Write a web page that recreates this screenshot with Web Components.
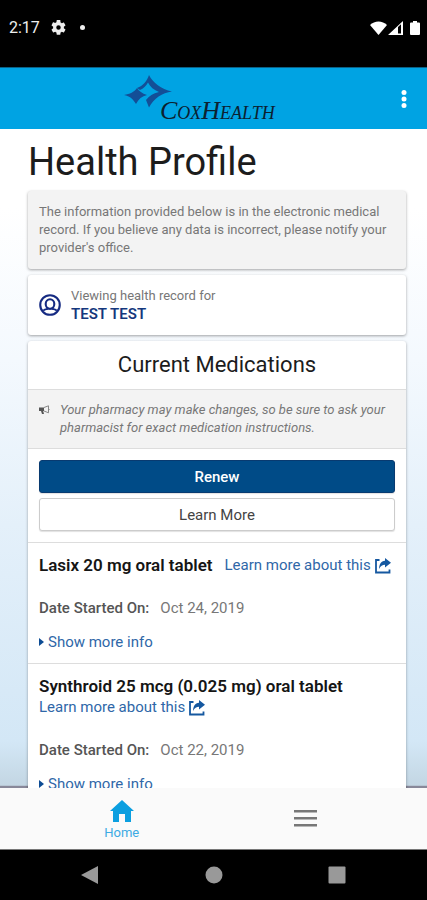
<!DOCTYPE html>
<html lang="en">
<head>
<meta charset="utf-8">
<meta name="viewport" content="width=device-width, initial-scale=1">
<title>Health Profile</title>
<style>
  body { margin: 0; font-family: Roboto, "Liberation Sans", sans-serif; color: #1c1c1c; background: #000; }
</style>
</head>
<body>
<health-app></health-app>
<script>
const define = (name, html, setup) => {
  const template = document.createElement('template');
  template.innerHTML = html;
  customElements.define(name, class extends HTMLElement {
    constructor() {
      super();
      this.attachShadow({ mode: 'open' }).append(template.content.cloneNode(true));
    }
    connectedCallback() { if (setup) setup(this, this.shadowRoot); }
  });
};

define('status-bar', `
<style>
  :host { display: flex; align-items: center; gap: 12px; height: 67px; padding: 0 7px 0 9px; box-sizing: border-box; background: #000; color: #eee; font-size: 16px; flex: none; }
  .row { display: flex; align-items: center; gap: 11px; flex: 1; padding-bottom: 12px; }
  .signals { display: flex; align-items: center; gap: 1px; padding-bottom: 12px; }
  .battery { margin-left: 6px; }
  .dot { width: 5px; height: 5px; border-radius: 50%; background: #eee; margin-left: 3px; }
</style>
<div class="row"><span>2:17</span>
<svg width="15" height="15" viewBox="2 2 20 20" fill="#eee"><path d="M19.14 12.94c.04-.3.06-.61.06-.94s-.02-.64-.07-.94l2.03-1.58c.18-.14.23-.41.12-.61l-1.92-3.32c-.12-.22-.37-.29-.59-.22l-2.39.96c-.5-.38-1.03-.7-1.62-.94l-.36-2.54A.48.48 0 0 0 13.92 2h-3.84c-.24 0-.43.17-.47.41l-.36 2.54c-.59.24-1.13.57-1.62.94l-2.39-.96c-.22-.08-.47 0-.59.22L2.74 8.87c-.12.21-.08.47.12.61l2.03 1.58c-.05.3-.09.63-.09.94s.02.64.07.94l-2.03 1.58a.49.49 0 0 0-.12.61l1.92 3.32c.12.22.37.29.59.22l2.39-.96c.5.38 1.03.7 1.62.94l.36 2.54c.05.24.24.41.48.41h3.84c.24 0 .44-.17.47-.41l.36-2.54c.59-.24 1.13-.56 1.62-.94l2.39.96c.22.08.47 0 .59-.22l1.92-3.32c.12-.22.07-.47-.12-.61l-2.01-1.58zM12 15a3 3 0 1 1 0-6 3 3 0 0 1 0 6z"/></svg>
<span class="dot"></span></div>
<div class="signals">
<svg width="17" height="14" viewBox="0 0 17 14" fill="#fff"><path d="M0 4C4.500-.7 12.500-.7 17 4L8.500 14z"/></svg>
<svg width="15" height="14" viewBox="0 0 15 14" fill="#fff"><path fill-rule="evenodd" d="M0 14L15 0v14zM10 6v6.500h3V3.200z"/></svg>
<svg class="battery" width="10" height="14" viewBox="0 0 10 14" fill="#fff"><path d="M3 0h4v1.500h2q1 0 1 1V13q0 1-1 1H1q-1 0-1-1V2.500q0-1 1-1h2z"/></svg>
</div>`);

define('brand-logo', `
<style>
  :host { display: block; }
  svg { display: block; overflow: visible; }
  text { font: italic 26px "Liberation Serif", serif; font-variant-caps: small-caps; }
</style>
<svg width="154" height="48" viewBox="0 0 154 48" role="img" aria-label="CoxHealth">
  <g fill="#134f97">
    <path d="M0 20C6 19 10 17 13 13C15 16 18 18.500 23 20C18 21 14.500 24 12 29C9 24 6 21 0 20Z"/>
    <path d="M13 13C19 11 23 6 25 0C29 8 37 14 48 16.500C38 18 30 23 25 32.500L22 25C25 21 29 18.500 35 17C30 15 26 12 24 7.500C22 11 19.500 13.500 16 15Z"/>
  </g>
  <text x="36" y="44" fill="#0c2130">CoxHealth</text>
</svg>`);

define('app-bar', `
<style>
  :host { display: flex; align-items: stretch; height: 62px; padding-left: 20px; background: #00a3e3; border-top: 1px solid #0b6287; box-sizing: border-box; flex: none; }
  .logo { flex: 1; display: flex; justify-content: center; align-items: center; }
  button { width: 46px; border: 0; background: none; padding: 0; display: flex; align-items: center; justify-content: center; }
</style>
<div class="logo"><slot></slot></div>
<button type="button" aria-label="More options"><svg width="6" height="20" fill="#fff"><circle cx="3" cy="3.500" r="2.500"/><circle cx="3" cy="10" r="2.500"/><circle cx="3" cy="16.500" r="2.500"/></svg></button>`);

define('info-card', `
<style>
  :host { display: block; background: #fff; border-radius: 3px; box-shadow: 0 1px 3px rgba(0,0,0,.36); }
  :host([tone="muted"]) { background: #f3f3f3; }
</style><slot></slot>`);

define('record-owner', `
<style>
  :host { display: flex; align-items: center; gap: 10px; padding: 11px; font-size: 13px; line-height: 19px; color: #777; }
  strong { display: block; font-size: 15px; font-weight: 600; color: #14377d; }
</style>
<svg width="22" height="22" viewBox="0 0 23 23" fill="none" stroke="#152a82" stroke-width="2.200"><circle cx="11.500" cy="11.500" r="10.200"/><ellipse cx="11.500" cy="10.500" rx="4.500" ry="5"/><path stroke-width="2" d="M4.500 17.500C5.500 16 7.500 16 9 15.500V14M18.500 17.500C17.500 16 15.500 16 14 15.500V14"/></svg>
<div><slot></slot><strong><slot name="name"></slot></strong></div>`);

define('pharmacy-notice', `
<style>
  :host { display: flex; gap: 10px; padding: 11px; background: #f3f3f3; border: solid #ddd; border-width: 1px 0; font-size: 13px; line-height: 18px; font-style: italic; color: #777; }
  svg { flex: none; margin-top: 4px; }
</style>
<svg width="11" height="10" viewBox="0 0 11 10"><path fill="#555" d="M0 2.500h5v3.500H4.200L5 9H3L2 6H0z"/><path fill="none" stroke="#888" d="M5 2.500L9.500.800v7L5 6M9.500 3.500q1.500.800 0 1.600"/></svg>
<div><slot></slot></div>`);

define('action-button', `
<style>
  :host { display: block; }
  button { display: block; width: 100%; height: 33px; border: 1px solid #ccc; border-radius: 3px; background: #fff; color: #444; font: 400 15px Roboto, "Liberation Sans", sans-serif; box-shadow: 0 1px 1px rgba(0,0,0,.12); }
  :host([primary]) button { background: #004b87; border-color: #083a70; color: #fff; font-weight: 500; }
</style><button type="button"><slot></slot></button>`);

define('medication-item', `
<style>
  :host { display: block; padding: 12px 11px 10px; border-top: 1px solid #ddd; font-size: 15px; line-height: 21px; }
  .head { display: flex; flex-wrap: wrap; column-gap: 12px; }
  h3 { margin: 0; font-size: 17px; font-weight: 600; line-height: 21px; color: #151515; }
  a { color: #2f67a8; text-decoration: none; display: flex; align-items: center; gap: 4px; }
  dl { display: flex; gap: 11px; margin: 22px 0 12px; }
  dt { font-weight: 500; color: #555; }
  dd { margin: 0; color: #777; }
  button { display: flex; align-items: center; gap: 4px; border: 0; padding: 0; background: none; color: #2f67a8; font: inherit; line-height: 22px; }
</style>
<div class="head"><h3></h3><a href="#learn">Learn more about this <svg width="16" height="16" viewBox="0 0 16 16"><path fill="none" stroke="#1558a0" stroke-width="1.800" d="M4.500 2H1v12.500h13.500v-3"/><path fill="#1558a0" d="M10 0l6 4.800-6 4.700V6.800C7.500 6.800 5.500 8 4 11c0-4.500 2-8 6-8.300z"/></svg></a></div>
<dl><dt>Date Started On:</dt><dd></dd></dl>
<button type="button"><svg width="5" height="8" viewBox="0 0 5 8"><path fill="#0d4c94" d="M0 0l5 4-5 4z"/></svg>Show more info</button>`,
(host, root) => {
  root.querySelector('h3').textContent = host.getAttribute('name');
  root.querySelector('dd').textContent = host.getAttribute('started');
});

define('tab-bar', `
<style>
  :host { display: flex; height: 62px; padding: 0 30px; background: #fafafa; border-bottom: 1px solid #777; box-sizing: border-box; flex: none; }
  a, button { flex: 1; display: flex; flex-direction: column; align-items: center; justify-content: center; gap: 3px; border: 0; padding: 0; background: none; font-size: 13px; line-height: 16px; color: #3daae3; text-decoration: none; }
  a { padding-top: 3px; }
</style>
<a href="#home"><svg width="24" height="22" viewBox="0 0 24 22"><path fill="#0b9fe0" d="M12 0l12 11h-3v11h-6v-8H9v8H3V11H0z"/></svg>Home</a>
<button type="button" aria-label="Menu"><svg width="23" height="17" viewBox="0 0 23 17" fill="#777"><path d="M0 0h23v2.500H0zM0 7h23v2.500H0zM0 14h23v2.500H0z"/></svg></button>`);

define('system-nav', `
<style>
  :host { display: flex; height: 50px; padding: 0 28px; background: #000; flex: none; }
  button { flex: 1; display: flex; align-items: center; justify-content: center; border: 0; padding: 0; background: none; }
</style>
<button type="button" aria-label="Back"><svg width="17" height="20" fill="#999"><path d="M0 10L17 1v18z"/></svg></button>
<button type="button" aria-label="Home screen"><svg width="18" height="18" fill="#999"><circle cx="9" cy="9" r="8.500"/></svg></button>
<button type="button" aria-label="Recent apps"><svg width="18" height="18" fill="#999"><rect x=".5" y=".5" width="17" height="17" rx="1"/></svg></button>`);

define('health-app', `
<style>
  :host { display: flex; flex-direction: column; height: 100vh; }
  main { flex: 1; min-height: 0; overflow-y: auto; scrollbar-width: none; padding: 10px 21px 0 28px; background: linear-gradient(#fff 12%, #f4f9fe 35%, #e4f0fa 60%, #d3e7f6 93%, #c3d6e3 99.600%, #889 99.700%); }
  h1 { margin: 0 0 6px; font-size: 38px; line-height: 46px; font-weight: 400; }
  .stack { display: flex; flex-direction: column; gap: 6px; }
  .intro { margin: 0; padding: 12px 11px; font-size: 13px; line-height: 18px; color: #777; }
  h2 { margin: 0; font-size: 22px; line-height: 48px; font-weight: 400; text-align: center; }
  .actions { display: flex; flex-direction: column; gap: 5px; padding: 11px; }
</style>
<status-bar></status-bar>
<app-bar><brand-logo></brand-logo></app-bar>
<main>
  <h1>Health Profile</h1>
  <div class="stack">
    <info-card tone="muted"><p class="intro">The information provided below is in the electronic medical record. If you believe any data is incorrect, please notify your provider's office.</p></info-card>
    <info-card><record-owner>Viewing health record for<span slot="name">TEST TEST</span></record-owner></info-card>
    <info-card>
      <h2>Current Medications</h2>
      <pharmacy-notice>Your pharmacy may make changes, so be sure to ask your pharmacist for exact medication instructions.</pharmacy-notice>
      <div class="actions"><action-button primary>Renew</action-button><action-button>Learn More</action-button></div>
      <medication-item name="Lasix 20 mg oral tablet" started="Oct 24, 2019"></medication-item>
      <medication-item name="Synthroid 25 mcg (0.025 mg) oral tablet" started="Oct 22, 2019"></medication-item>
    </info-card>
  </div>
</main>
<tab-bar></tab-bar>
<system-nav></system-nav>`);
</script>
</body>
</html>
